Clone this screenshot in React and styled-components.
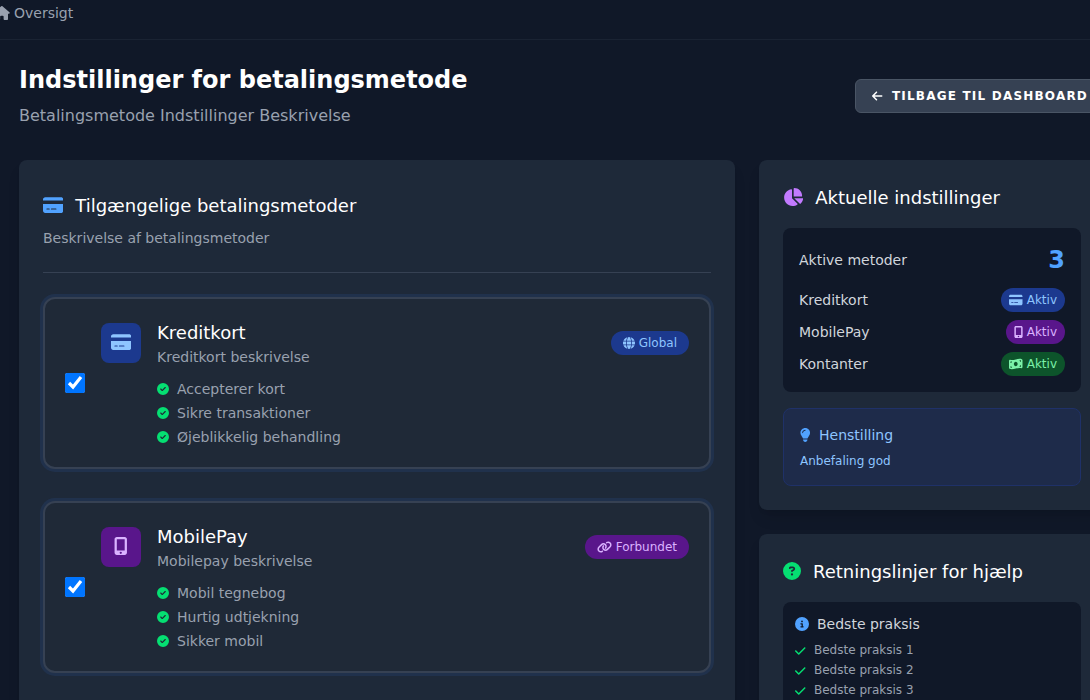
import styled, {createGlobalStyle} from 'styled-components';
import React from "react";
import {
    FaArrowLeft,
    FaChartPie,
    FaCheck,
    FaCircleCheck,
    FaCircleInfo,
    FaCircleQuestion,
    FaCreditCard,
    FaGlobe,
    FaHouse,
    FaLightbulb,
    FaLink,
    FaMobileScreenButton,
    FaMoneyBillWave,
} from "react-icons/fa6";

const GlobalStyle = createGlobalStyle`
  *, *::before, *::after {
    box-sizing: border-box;
  }
  html, body {
    height: 100%;
    margin: 0;
    overflow: hidden;
    background-color: #101828;
  }
  body {
    font-family: "DejaVu Sans", sans-serif;
    font-size: 14px;
    line-height: 20px;
    color: #d1d5dc;
  }
  h1, h2, h3, h4, p, ul {
    margin: 0;
    padding: 0;
    font-weight: 400;
  }
  ul {
    list-style: none;
  }
  svg {
    display: block;
    flex-shrink: 0;
  }
`

// tint of the tiles and badges, one for each kind of payment
const tones = {
    blue: {background: "#1c398e", color: "#8ec5ff"},
    purple: {background: "#59168b", color: "#dab2ff"},
    green: {background: "#0d542b", color: "#7bf1a8"},
};

// the glyphs are not square, so each one gets the width of its own viewBox
const StyledHouseIcon = styled(FaHouse)`
  width: 1.125em;
`
const StyledCardIcon = styled(FaCreditCard)`
  width: 1.125em;
`
const StyledPieIcon = styled(FaChartPie)`
  width: 1.125em;
`
const StyledMoneyIcon = styled(FaMoneyBillWave)`
  width: 1.125em;
`
const StyledLinkIcon = styled(FaLink)`
  width: 1.25em;
`
const StyledMobileIcon = styled(FaMobileScreenButton)`
  width: 0.75em;
`
const StyledBulbIcon = styled(FaLightbulb)`
  width: 0.75em;
  margin-right: 0.5px;
`
const StyledCheckIcon = styled(FaCheck)`
  width: 0.875em;
  margin-right: 0.5px;
`
const StyledArrowIcon = styled(FaArrowLeft)`
  width: 0.875em;
`

const StyledPage = styled.div`
  height: 100vh;
  overflow: hidden;
`
const StyledBreadcrumb = styled.nav`
  height: 40px;
  display: flex;
  align-items: flex-start;
  gap: 4px;
  padding-top: 3px;
  margin-left: -5.75px;
  border-bottom: 1px solid #1a2333;
  color: #99a1af;

  svg {
    margin-top: 3px;
  }
`
const StyledMain = styled.main`
  width: 1105px;
  padding: 24px 0 0 19px;
`
const StyledHeader = styled.header`
  display: flex;
  justify-content: space-between;
  align-items: center;
  margin-bottom: 32px;
`
const StyledTitleH1 = styled.h1`
  font-size: 24px;
  line-height: 32px;
  font-weight: 700;
  color: #ffffff;
`
const StyledSubtitleP = styled.p`
  margin-top: 8px;
  font-size: 16px;
  line-height: 24px;
  color: #99a1af;
`
const StyledBackButton = styled.button`
  display: flex;
  align-items: center;
  gap: 9px;
  padding: 8px 16px;
  border: 1px solid #4a5565;
  border-radius: 6px;
  background-color: #364153;
  color: #ffffff;
  font-family: inherit;
  font-size: 12px;
  line-height: 16px;
  font-weight: 700;
  letter-spacing: 1.2px;
  text-transform: uppercase;
  white-space: nowrap;

  svg {
    margin-top: -1px;
  }
`
const StyledColumns = styled.div`
  display: grid;
  grid-template-columns: 716px 346px;
  align-items: start;
  gap: 24px;
`
const StyledSidebar = styled.aside`
  display: flex;
  flex-direction: column;
  gap: 24px;
`
const StyledCard = styled.section`
  min-height: ${props => props.$minHeight || "0"};
  padding: 24px;
  border-radius: 8px;
  background-color: #1e2939;
  box-shadow: 0 10px 15px -3px rgba(0, 0, 0, 0.1), 0 4px 6px -4px rgba(0, 0, 0, 0.1);
`
const StyledCardHeading = styled.div`
  display: flex;
  align-items: center;
  gap: 12px;
  margin-bottom: ${props => props.$space || "16px"};
  font-size: 18px;
  color: ${props => props.$color};

  svg {
    margin-top: -2px;
  }
`
const StyledCardTitleH2 = styled.h2`
  font-size: 18px;
  line-height: 28px;
  color: #ffffff;
`
const StyledMethodsIntro = styled.div`
  padding: 8px 0 24px;
  border-bottom: 1px solid #364153;
  margin-bottom: 24px;
  color: #99a1af;
`
const StyledMethodList = styled.div`
  display: flex;
  flex-direction: column;
  gap: 32px;
`
const StyledMethod = styled.label`
  display: flex;
  align-items: center;
  gap: 16px;
  padding: 20px;
  border: 2px solid #364153;
  border-radius: 12px;
  background-color: #1f2937;
  box-shadow: 0 0 0 3px rgba(59, 130, 246, 0.1);
`
const StyledCheckbox = styled.input`
  width: 20px;
  height: 20px;
  margin: 0;
  flex-shrink: 0;
`
const StyledMethodBody = styled.div`
  flex: 1;
`
const StyledMethodTop = styled.div`
  display: flex;
  align-items: center;
  gap: 16px;
`
const StyledMethodTile = styled.div`
  width: 40px;
  height: 40px;
  display: flex;
  justify-content: center;
  align-items: center;
  padding-bottom: 2px;
  border-radius: 8px;
  font-size: 18px;
  background-color: ${props => tones[props.$tone].background};
  color: ${props => tones[props.$tone].color};
`
const StyledMethodText = styled.div`
  flex: 1;
  color: #99a1af;
`
const StyledMethodTitleH3 = styled.h3`
  font-size: 18px;
  line-height: 28px;
  color: #ffffff;
`
const StyledBadge = styled.span`
  display: flex;
  align-items: center;
  gap: 4px;
  padding: 4px ${props => props.$wide ? "12px" : "8px"};
  border-radius: 12px;
  font-size: 12px;
  line-height: 16px;
  background-color: ${props => tones[props.$tone].background};
  color: ${props => tones[props.$tone].color};
`
const StyledFeatureList = styled.ul`
  display: flex;
  flex-direction: column;
  gap: 4px;
  margin-top: 12px;
  padding-left: 56px;
  color: #99a1af;
`
const StyledFeature = styled.li`
  display: flex;
  align-items: center;
  gap: 8px;

  svg {
    font-size: 12px;
    color: #05df72;
  }
`
const StyledPanel = styled.div`
  padding: ${props => props.$padding};
  border-radius: 8px;
  background-color: #101828;
`
const StyledStatusList = styled.div`
  display: flex;
  flex-direction: column;
  gap: 8px;
  margin-top: 12px;
`
const StyledStatusRow = styled.div`
  display: flex;
  justify-content: space-between;
  align-items: center;
`
const StyledCount = styled.span`
  font-size: 24px;
  line-height: 32px;
  font-weight: 700;
  color: #51a2ff;
`
const StyledTip = styled.div`
  margin-top: 16px;
  padding: 16px;
  border: 1px solid #1f3168;
  border-radius: 8px;
  background-color: #1e2b4a;
  color: #8ec5ff;
  font-size: 12px;
  line-height: 16px;
`
const StyledSmallHeading = styled.div`
  display: flex;
  align-items: center;
  gap: 8px;
  margin-bottom: 8px;
  font-size: 14px;
  line-height: 20px;

  svg {
    color: #51a2ff;
  }
`
const StyledPracticeList = styled.ul`
  display: flex;
  flex-direction: column;
  gap: 4px;
  font-size: 12px;
  line-height: 16px;
  color: #99a1af;
`
const StyledPractice = styled.li`
  display: flex;
  align-items: flex-start;
  gap: 8px;

  svg {
    margin-top: 3px;
    color: #05df72;
  }
`

const methods = [
    {
        title: "Kreditkort",
        description: "Kreditkort beskrivelse",
        tone: "blue",
        icon: <StyledCardIcon/>,
        badge: "Global",
        badgeIcon: <FaGlobe/>,
        features: ["Accepterer kort", "Sikre transaktioner", "Øjeblikkelig behandling"],
    },
    {
        title: "MobilePay",
        description: "Mobilepay beskrivelse",
        tone: "purple",
        icon: <StyledMobileIcon/>,
        badge: "Forbundet",
        badgeIcon: <StyledLinkIcon/>,
        features: ["Mobil tegnebog", "Hurtig udtjekning", "Sikker mobil"],
    },
];

const statuses = [
    {label: "Kreditkort", tone: "blue", icon: <StyledCardIcon/>},
    {label: "MobilePay", tone: "purple", icon: <StyledMobileIcon/>},
    {label: "Kontanter", tone: "green", icon: <StyledMoneyIcon/>},
];

const practices = ["Bedste praksis 1", "Bedste praksis 2", "Bedste praksis 3"];

function PaymentMethod({title, description, tone, icon, badge, badgeIcon, features}){
    return(
        <StyledMethod>
            <StyledCheckbox type="checkbox" defaultChecked/>
            <StyledMethodBody>
                <StyledMethodTop>
                    <StyledMethodTile $tone={tone}>{icon}</StyledMethodTile>
                    <StyledMethodText>
                        <StyledMethodTitleH3>{title}</StyledMethodTitleH3>
                        <p>{description}</p>
                    </StyledMethodText>
                    <StyledBadge $tone={tone} $wide>{badgeIcon}{badge}</StyledBadge>
                </StyledMethodTop>
                <StyledFeatureList>
                    {features.map(feature => (
                        <StyledFeature key={feature}><FaCircleCheck/>{feature}</StyledFeature>
                    ))}
                </StyledFeatureList>
            </StyledMethodBody>
        </StyledMethod>
    )
}

function CurrentSettings(){
    return(
        <StyledCard>
            <StyledCardHeading $color="#c27aff">
                <StyledPieIcon/>
                <StyledCardTitleH2>Aktuelle indstillinger</StyledCardTitleH2>
            </StyledCardHeading>
            <StyledPanel $padding="16px">
                <StyledStatusRow>
                    Aktive metoder
                    <StyledCount>{statuses.length}</StyledCount>
                </StyledStatusRow>
                <StyledStatusList>
                    {statuses.map(status => (
                        <StyledStatusRow key={status.label}>
                            {status.label}
                            <StyledBadge $tone={status.tone}>{status.icon}Aktiv</StyledBadge>
                        </StyledStatusRow>
                    ))}
                </StyledStatusList>
            </StyledPanel>
            <StyledTip>
                <StyledSmallHeading><StyledBulbIcon/>Henstilling</StyledSmallHeading>
                <p>Anbefaling god</p>
            </StyledTip>
        </StyledCard>
    )
}

function HelpGuidelines(){
    return(
        <StyledCard $minHeight="260px">
            <StyledCardHeading $color="#05df72">
                <FaCircleQuestion/>
                <StyledCardTitleH2>Retningslinjer for hjælp</StyledCardTitleH2>
            </StyledCardHeading>
            <StyledPanel $padding="12px">
                <StyledSmallHeading><FaCircleInfo/>Bedste praksis</StyledSmallHeading>
                <StyledPracticeList>
                    {practices.map(practice => (
                        <StyledPractice key={practice}><StyledCheckIcon/>{practice}</StyledPractice>
                    ))}
                </StyledPracticeList>
            </StyledPanel>
        </StyledCard>
    )
}

function App(){
    return(
        <StyledPage>
            <GlobalStyle/>
            <StyledBreadcrumb>
                <StyledHouseIcon/>
                Oversigt
            </StyledBreadcrumb>
            <StyledMain>
                <StyledHeader>
                    <div>
                        <StyledTitleH1>Indstillinger for betalingsmetode</StyledTitleH1>
                        <StyledSubtitleP>Betalingsmetode Indstillinger Beskrivelse</StyledSubtitleP>
                    </div>
                    <StyledBackButton><StyledArrowIcon/>Tilbage til dashboard</StyledBackButton>
                </StyledHeader>
                <StyledColumns>
                    <StyledCard $minHeight="600px">
                        <StyledMethodsIntro>
                            <StyledCardHeading $color="#51a2ff" $space="8px">
                                <StyledCardIcon/>
                                <StyledCardTitleH2>Tilgængelige betalingsmetoder</StyledCardTitleH2>
                            </StyledCardHeading>
                            <p>Beskrivelse af betalingsmetoder</p>
                        </StyledMethodsIntro>
                        <StyledMethodList>
                            {methods.map(method => <PaymentMethod key={method.title} {...method}/>)}
                        </StyledMethodList>
                    </StyledCard>
                    <StyledSidebar>
                        <CurrentSettings/>
                        <HelpGuidelines/>
                    </StyledSidebar>
                </StyledColumns>
            </StyledMain>
        </StyledPage>
    )
}

export default App;
